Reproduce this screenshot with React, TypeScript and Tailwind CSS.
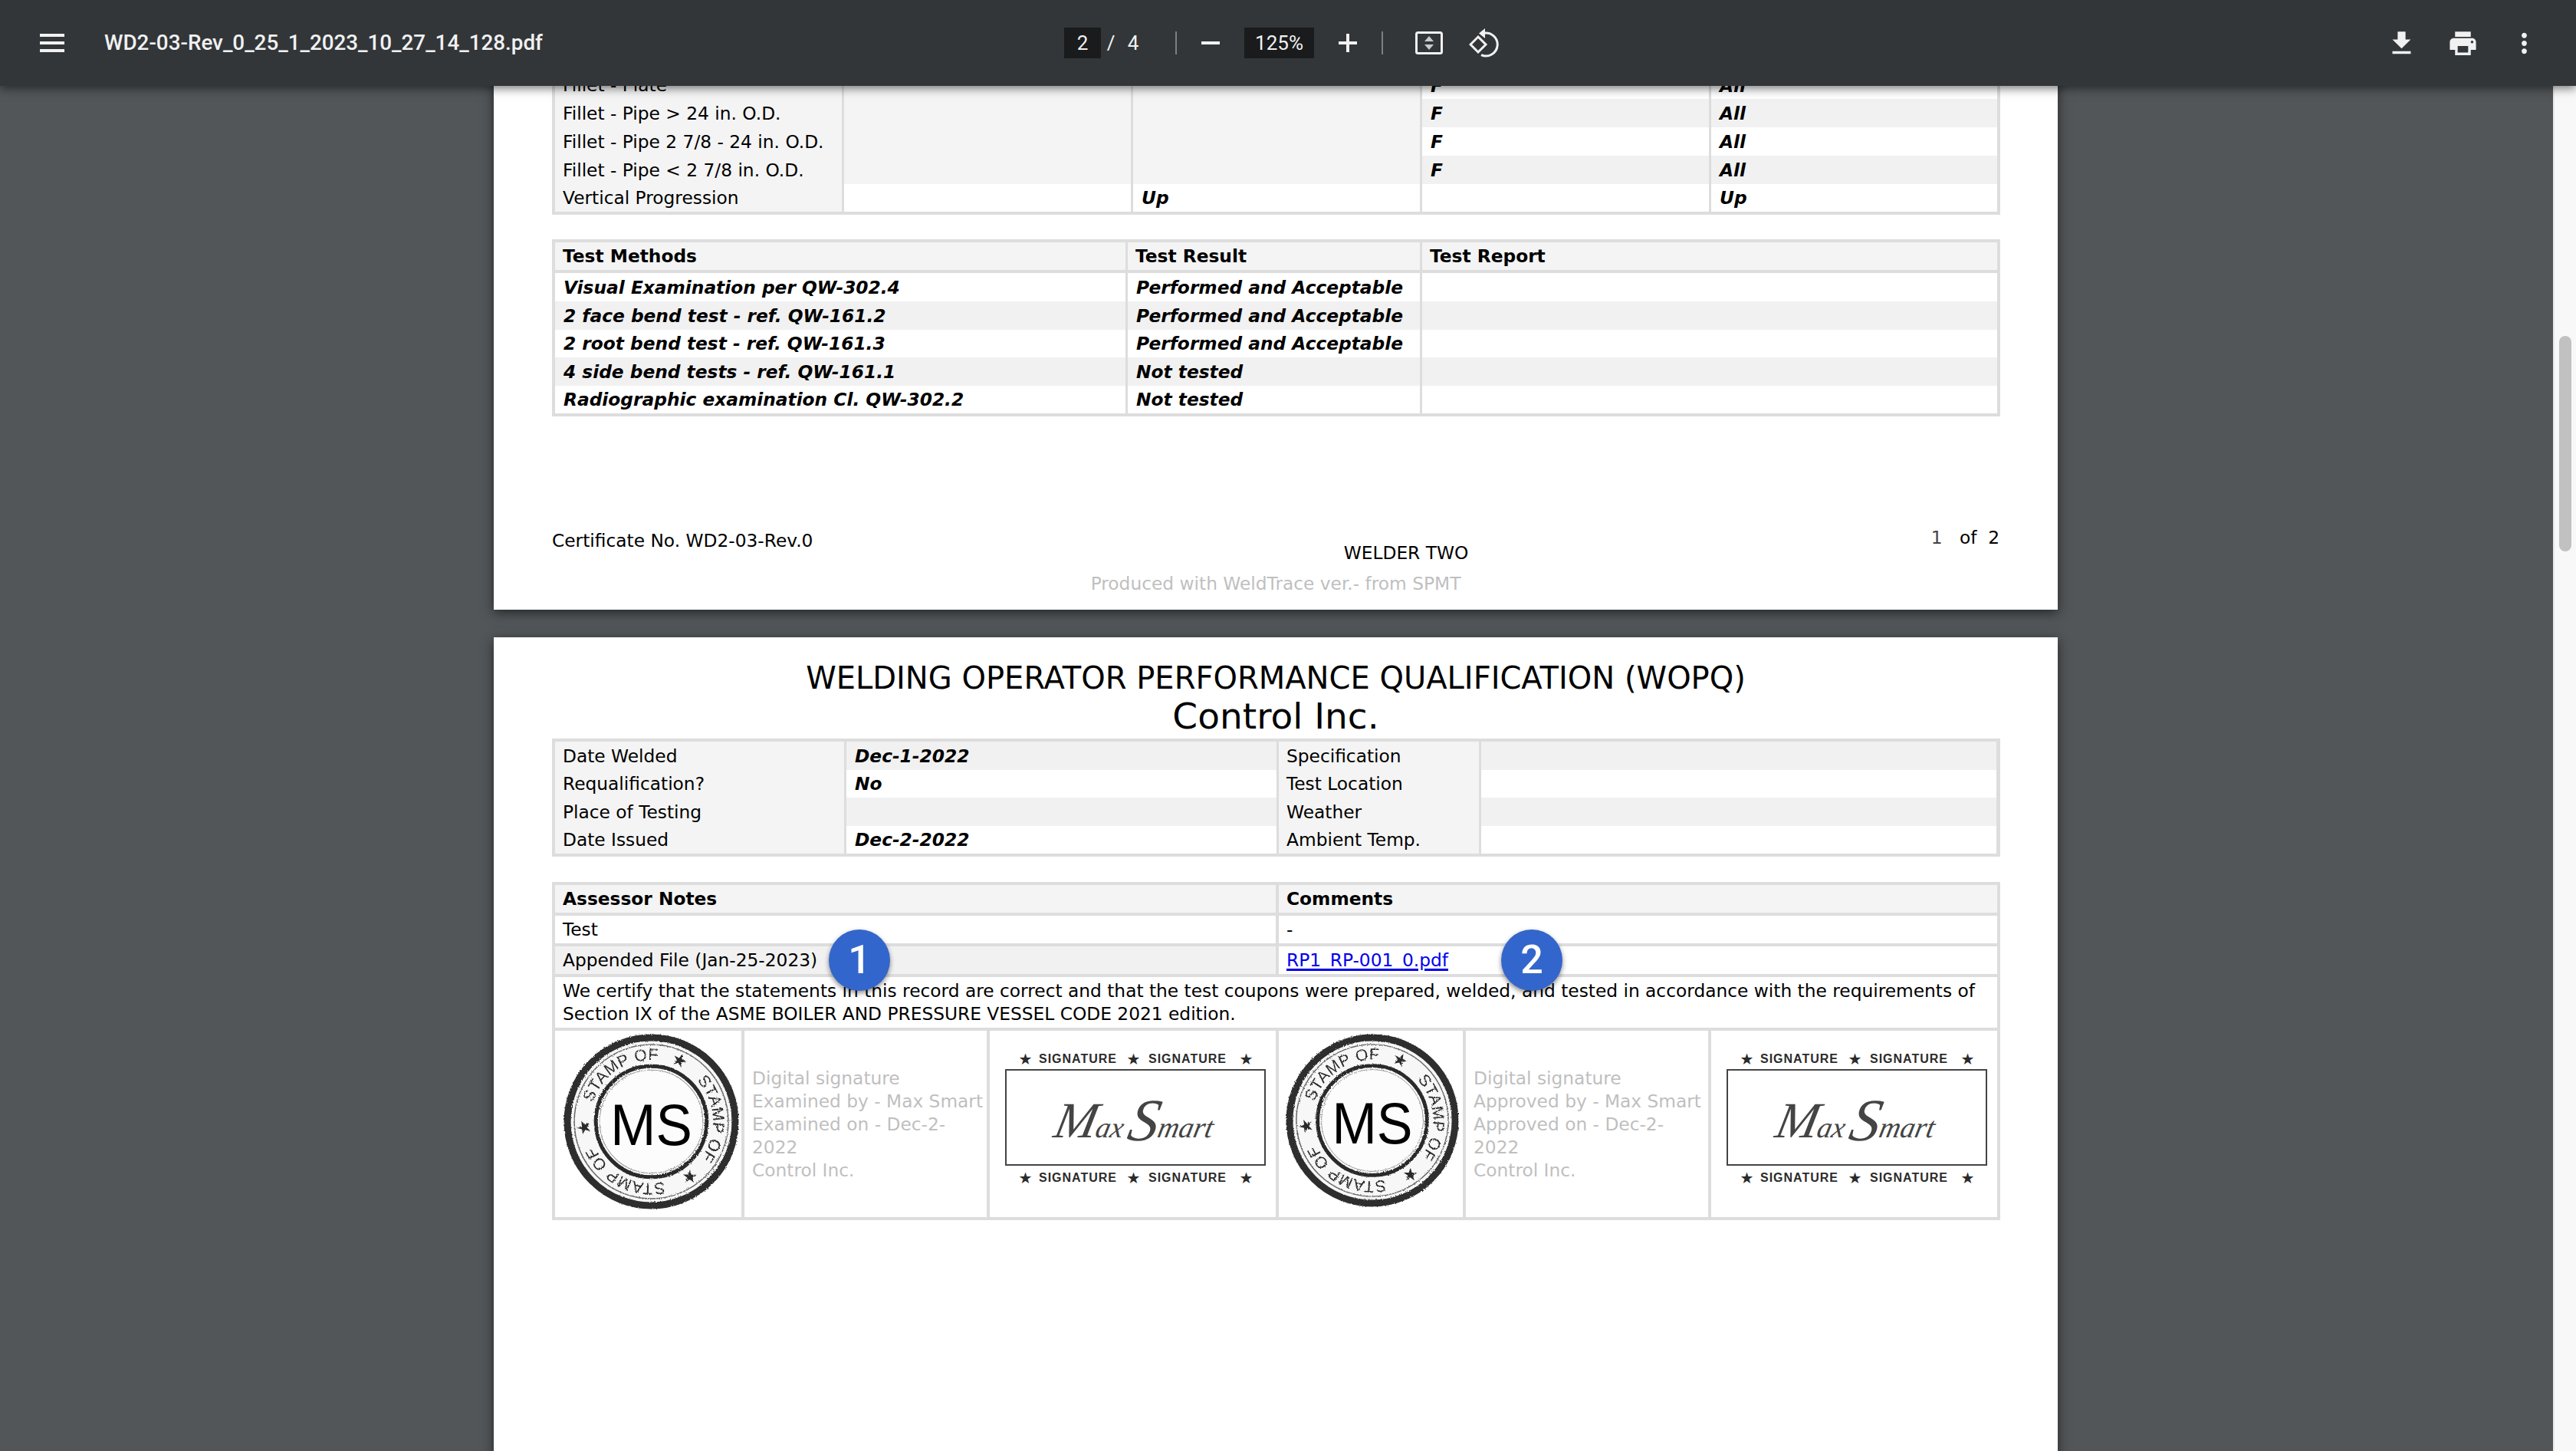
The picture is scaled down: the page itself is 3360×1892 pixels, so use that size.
import type { ReactNode } from "react";

const tones = {
  label: "bg-[#f4f4f4]",
  white: "bg-white",
  stripe: "bg-[#f1f1f1]",
};

type Tone = keyof typeof tones;

function Cell({
  tone = "white",
  value,
  className = "",
}: {
  tone?: Tone;
  value?: ReactNode;
  className?: string;
}) {
  return (
    <div className={`flex items-center whitespace-nowrap pl-[10px] pt-px ${tones[tone]} ${className}`}>{value}</div>
  );
}

function Value({ text }: { text: string }) {
  return <span className="pl-px font-bold italic">{text}</span>;
}

const H = ({ text }: { text: string }) => <span className="font-bold">{text}</span>;

const qualRows = [
  { h: "h-[36px]", label: "Fillet - Plate", c2: "", c3: "", c4: "F", c5: "All", t2: "label", t4: "white", line: true },
  { h: "h-[37px]", label: "Fillet - Pipe > 24 in. O.D.", c2: "", c3: "", c4: "F", c5: "All", t2: "label", t4: "stripe" },
  { h: "h-[37px]", label: "Fillet - Pipe 2 7/8 - 24 in. O.D.", c2: "", c3: "", c4: "F", c5: "All", t2: "label", t4: "white" },
  { h: "h-[37px]", label: "Fillet - Pipe < 2 7/8 in. O.D.", c2: "", c3: "", c4: "F", c5: "All", t2: "label", t4: "stripe" },
  { h: "h-[36px]", label: "Vertical Progression", c2: "", c3: "Up", c4: "", c5: "Up", t2: "white", t4: "white" },
] as const;

const testRows = [
  { h: "h-[37px]", method: "Visual Examination per QW-302.4", result: "Performed and Acceptable", tone: "white" },
  { h: "h-[37px]", method: "2 face bend test - ref. QW-161.2", result: "Performed and Acceptable", tone: "stripe" },
  { h: "h-[36px]", method: "2 root bend test - ref. QW-161.3", result: "Performed and Acceptable", tone: "white" },
  { h: "h-[37px]", method: "4 side bend tests - ref. QW-161.1", result: "Not tested", tone: "stripe" },
  { h: "h-[36px]", method: "Radiographic examination Cl. QW-302.2", result: "Not tested", tone: "white" },
] as const;

const dateRows = [
  { h: "h-[37px]", a: "Date Welded", b: "Dec-1-2022", c: "Specification", tone: "stripe" },
  { h: "h-[36px]", a: "Requalification?", b: "No", c: "Test Location", tone: "white" },
  { h: "h-[37px]", a: "Place of Testing", b: "", c: "Weather", tone: "stripe" },
  { h: "h-[36px]", a: "Date Issued", b: "Dec-2-2022", c: "Ambient Temp.", tone: "white" },
] as const;

function ToolbarIcon({ d }: { d: string }) {
  return (
    <svg viewBox="0 0 24 24" className="h-[41px] w-[41px] fill-[#f1f1f1]">
      <path d={d} />
    </svg>
  );
}

function Toolbar() {
  return (
    <div className="relative z-10 flex h-[112px] shrink-0 items-center bg-[#323639] font-['Roboto',sans-serif] text-[#f1f1f1] shadow-[0_3px_12px_rgba(0,0,0,0.55)]">
      <div className="w-[1388px] shrink-0 pl-[52px]">
        <div className="flex items-center">
          <div className="flex h-[24px] w-[32px] flex-col justify-between">
            <span className="h-[4px] bg-[#f1f1f1]" />
            <span className="h-[4px] bg-[#f1f1f1]" />
            <span className="h-[4px] bg-[#f1f1f1]" />
          </div>
          <span className="ml-[52px] text-[27.8px] font-medium whitespace-nowrap">
            WD2-03-Rev_0_25_1_2023_10_27_14_128.pdf
          </span>
        </div>
      </div>
      <div className="flex h-[40px] w-[48px] items-center justify-center bg-[#191b1c] text-[26px]">2</div>
      <span className="w-[26px] text-center text-[26px]">/</span>
      <span className="w-[32px] text-center text-[26px]">4</span>
      <span className="ml-[39px] h-[30px] w-[2px] bg-[#7d8083]" />
      <span className="ml-[32px] h-[4px] w-[24px] bg-[#f1f1f1]" />
      <div className="ml-[32px] flex h-[40px] w-[91px] items-center justify-center bg-[#191b1c] text-[26px]">125%</div>
      <svg viewBox="0 0 24 24" className="ml-[32px] h-[24px] w-[24px] fill-[#f1f1f1]">
        <path d="M10 0h4v10h10v4H14v10h-4V14H0v-4h10z" />
      </svg>
      <span className="ml-[32px] h-[30px] w-[2px] bg-[#7d8083]" />
      <svg viewBox="0 0 36 30" className="ml-[42px] h-[30px] w-[36px]">
        <rect x="1.5" y="1.5" width="33" height="27" rx="2" fill="none" stroke="#f1f1f1" strokeWidth="3" />
        <path d="M18 6l6 7H12zM18 24l6-7H12z" fill="#c9cacb" />
      </svg>
      <svg viewBox="0 0 40 40" className="ml-[34px] h-[40px] w-[40px]" fill="none" stroke="#f1f1f1" strokeWidth="3">
        <path d="M12 12l10 10-10 10L2 22z" />
        <path d="M19 7.3A15 15 0 1 1 16 35.6" />
        <path d="M21 1v13l-8-6.5z" fill="#f1f1f1" stroke="none" />
      </svg>
      <div className="ml-auto flex items-center gap-[39px] pr-[47px]">
        <ToolbarIcon d="M19 9h-4V3H9v6H5l7 7 7-7zM5 18v2h14v-2H5z" />
        <ToolbarIcon d="M19 8H5c-1.66 0-3 1.34-3 3v6h4v4h12v-4h4v-6c0-1.66-1.34-3-3-3zm-3 11H8v-5h8v5zm3-7c-.55 0-1-.45-1-1s.45-1 1-1 1 .45 1 1-.45 1-1 1zm-1-9H6v4h12V3z" />
        <ToolbarIcon d="M12 8c1.1 0 2-.9 2-2s-.9-2-2-2-2 .9-2 2 .9 2 2 2zm0 2c-1.1 0-2 .9-2 2s.9 2 2 2 2-.9 2-2-.9-2-2-2zm0 6c-1.1 0-2 .9-2 2s.9 2 2 2 2-.9 2-2-.9-2-2-2z" />
      </div>
    </div>
  );
}

function QualificationTable() {
  return (
    <div className="flex w-[1889px] flex-col bg-[#dddddd] px-[4px] pb-[4px]">
      {qualRows.map(row => (
        <div key={row.label} className={`grid grid-cols-[374px_374px_374px_374px_373px] gap-x-[3px] ${row.h}`}>
          <Cell tone="label" value={row.label} className={"line" in row ? "border-b border-[#ebebeb]" : ""} />
          <Cell tone={row.t2} className={"line" in row ? "border-b border-[#ebebeb]" : ""} />
          <Cell tone={row.t2} value={<Value text={row.c3} />} className={"line" in row ? "border-b border-[#ebebeb]" : ""} />
          <Cell tone={row.t4} value={<Value text={row.c4} />} />
          <Cell tone={row.t4} value={<Value text={row.c5} />} />
        </div>
      ))}
    </div>
  );
}

function TestTable() {
  return (
    <div className="mt-[32px] flex w-[1889px] flex-col bg-[#dddddd] p-[4px]">
      <div className="mb-[4px] grid h-[36px] grid-cols-[744px_381px_750px] gap-x-[3px]">
        <Cell tone="label" value={<H text="Test Methods" />} />
        <Cell tone="label" value={<H text="Test Result" />} />
        <Cell tone="label" value={<H text="Test Report" />} />
      </div>
      {testRows.map(row => (
        <div key={row.method} className={`grid grid-cols-[744px_381px_750px] gap-x-[3px] ${row.h}`}>
          <Cell tone={row.tone} value={<Value text={row.method} />} />
          <Cell tone={row.tone} value={<Value text={row.result} />} />
          <Cell tone={row.tone} />
        </div>
      ))}
    </div>
  );
}

function Stamp({ size, id }: { size: string; id: string }) {
  return (
    <svg viewBox="0 0 228 228" className={size}>
      <defs>
        <path id={id} d="M37.9 89.3A80 80 0 0 1 141.4 38.8" fill="none" />
        <filter id={`${id}-rough`} x="-5%" y="-5%" width="110%" height="110%">
          <feTurbulence type="fractalNoise" baseFrequency="0.7" numOctaves="2" seed="4" result="grain" />
          <feDisplacementMap in="SourceGraphic" in2="grain" scale="3" />
          <feGaussianBlur stdDeviation="0.55" />
        </filter>
      </defs>
      <g filter={`url(#${id}-rough)`}>
        <circle cx="114" cy="114" r="109" fill="#f7f7f7" stroke="#2e2e2e" strokeWidth="9" />
        <circle cx="114" cy="114" r="100" fill="none" stroke="#666666" strokeWidth="1.5" />
        <circle cx="114" cy="114" r="72" fill="#fcfcfc" stroke="#2b2b2b" strokeWidth="5" />
        <circle cx="114" cy="114" r="67" fill="none" stroke="#999999" strokeWidth="1" />
        {[0, 120, 240].map(angle => (
          <g key={angle} transform={`rotate(${angle} 114 114)`}>
            <text className="font-['Liberation_Sans',sans-serif]" fontSize="21" letterSpacing="0.5" fill="#2b2b2b">
              <textPath href={`#${id}`}>STAMP OF</textPath>
            </text>
            <text
              x="114"
              y="34"
              transform="rotate(25 114 114)"
              textAnchor="middle"
              fontSize="23"
              fill="#2b2b2b"
              className="font-['DejaVu_Sans',sans-serif]"
            >
              ★
            </text>
          </g>
        ))}
      </g>
      <text
        x="114"
        y="144"
        textAnchor="middle"
        fontSize="76"
        textLength="106"
        lengthAdjust="spacingAndGlyphs"
        fill="#000000"
        className="font-['Liberation_Sans',sans-serif]"
      >
        MS
      </text>
    </svg>
  );
}

function SignatureBand({ height }: { height: string }) {
  const star = <span className="w-[20px] text-center font-['DejaVu_Sans',sans-serif] text-[20px]">★</span>;
  return (
    <div
      className={`flex items-center pl-[17px] font-['Liberation_Sans',sans-serif] text-[16px] font-bold tracking-[1px] text-[#2b2b2b] ${height}`}
    >
      {star}
      <span className="ml-[7px] w-[102px]">SIGNATURE</span>
      <span className="ml-[12px] flex">{star}</span>
      <span className="ml-[9px] w-[102px]">SIGNATURE</span>
      <span className="ml-[16px] flex">{star}</span>
    </div>
  );
}

function Signature() {
  return (
    <div className="flex flex-col pl-[20px] pt-[24px]">
      <SignatureBand height="h-[26px]" />
      <div className="flex h-[126px] w-[340px] items-end justify-center border-2 border-[#444444] pb-[26px] font-['Liberation_Serif',serif] font-normal text-[#444444] italic">
        <div className="flex -skew-x-[12deg] items-end">
          <span className="text-[66px] leading-[62px]">M</span>
          <span className="text-[38px] leading-[44px]">ax</span>
          <span className="ml-[6px] text-[78px] leading-[62px]">S</span>
          <span className="text-[38px] leading-[44px]">mart</span>
        </div>
      </div>
      <SignatureBand height="h-[32px]" />
    </div>
  );
}

function DigitalText({ lines }: { lines: string[] }) {
  return (
    <div className="pl-[10px] pr-[2px] pt-[47px] leading-[30px] text-[#bfbfbf]">
      {lines.map(line => (
        <div key={line}>{line}</div>
      ))}
    </div>
  );
}

function Badge({ n, className }: { n: number; className: string }) {
  return (
    <div
      className={`absolute top-[62px] flex h-[80px] w-[80px] items-center justify-center rounded-full bg-[#3366cc] font-['Roboto',sans-serif] text-[52px] font-medium text-white shadow-[0_3px_6px_rgba(0,0,0,0.45)] ${className}`}
    >
      {n}
    </div>
  );
}

function AssessorTable() {
  return (
    <div className="relative mt-[33px] flex w-[1889px] flex-col gap-y-[4px] bg-[#dddddd] p-[4px]">
      <div className="grid h-[36px] grid-cols-[940px_937px] gap-x-[4px]">
        <Cell tone="label" value={<H text="Assessor Notes" />} />
        <Cell tone="label" value={<H text="Comments" />} />
      </div>
      <div className="grid h-[36px] grid-cols-[940px_937px] gap-x-[4px]">
        <Cell value="Test" />
        <Cell value="-" />
      </div>
      <div className="grid h-[36px] grid-cols-[940px_937px] gap-x-[4px]">
        <Cell tone="stripe" value="Appended File (Jan-25-2023)" />
        <Cell
          value={
            <a href="#" className="text-[#0000ee] underline decoration-[3px] underline-offset-[3px]">
              RP1_RP-001_0.pdf
            </a>
          }
        />
      </div>
      <div className="h-[66px] bg-white pl-[10px] pt-[3px] leading-[30px]">
        We certify that the statements in this record are correct and that the test coupons were prepared, welded, and
        tested in accordance with the requirements of Section IX of the ASME BOILER AND PRESSURE VESSEL CODE 2021
        edition.
      </div>
      <div className="grid h-[243px] grid-cols-[243px_316px_373px_240px_316px_373px] gap-x-[4px] bg-[#dddddd]">
        <div className="bg-white pl-[11px] pt-[4px]">
          <Stamp id="stamp-arc-a" size="h-[229px] w-[229px]" />
        </div>
        <div className="bg-white">
          <DigitalText lines={["Digital signature", "Examined by - Max Smart", "Examined on - Dec-2-2022", "Control Inc."]} />
        </div>
        <div className="bg-white">
          <Signature />
        </div>
        <div className="bg-white pl-[9px] pt-[4px]">
          <Stamp id="stamp-arc-b" size="h-[226px] w-[226px]" />
        </div>
        <div className="bg-white">
          <DigitalText lines={["Digital signature", "Approved by - Max Smart", "Approved on - Dec-2-2022", "Control Inc."]} />
        </div>
        <div className="bg-white">
          <Signature />
        </div>
      </div>
      <Badge n={1} className="left-[361px]" />
      <Badge n={2} className="left-[1238px]" />
    </div>
  );
}

export default function App() {
  return (
    <div className="flex h-[1892px] w-[3360px] flex-col overflow-hidden font-['DejaVu_Sans',sans-serif] text-[23.3px] text-black">
      <Toolbar />
      <div className="flex min-h-0 flex-1">
        <div className="min-w-0 flex-1 overflow-hidden bg-[#525659] pl-[644px]">
          <div className="-mt-[19px] w-[2040px] bg-white pb-[19px] pl-[76px] shadow-[0_4px_14px_rgba(0,0,0,0.55)]">
            <QualificationTable />
            <TestTable />
            <div className="mt-[143px] grid h-[59px] grid-cols-[1000px_228px_660px]">
              <div className="pt-[4px] leading-[30px]">Certificate No. WD2-03-Rev.0</div>
              <div className="pt-[20px] text-center leading-[30px]">WELDER TWO</div>
              <div className="text-right leading-[30px] whitespace-pre">
                <span className="text-[#444444]">1</span>   of  2
              </div>
            </div>
            <div className="-ml-[76px] pt-px text-center leading-[30px] text-[#bfbfbf]">
              Produced with WeldTrace ver.- from SPMT
            </div>
          </div>
          <div className="mt-[36px] h-[1100px] w-[2040px] bg-white pl-[76px] pt-[30px] shadow-[0_4px_14px_rgba(0,0,0,0.55)]">
            <div className="-ml-[76px] text-center">
              <div className="text-[40px] leading-[47px]">WELDING OPERATOR PERFORMANCE QUALIFICATION (WOPQ)</div>
              <div className="text-[47px] leading-[51px]">Control Inc.</div>
            </div>
            <div className="mt-[4px] flex w-[1889px] flex-col bg-[#dddddd] p-[4px]">
              {dateRows.map(row => (
                <div key={row.a} className={`grid grid-cols-[377px_561px_261px_672px] gap-x-[3px] ${row.h}`}>
                  <Cell tone="label" value={row.a} />
                  <Cell tone={row.tone} value={<Value text={row.b} />} />
                  <Cell tone="label" value={row.c} />
                  <Cell tone={row.tone} />
                </div>
              ))}
            </div>
            <AssessorTable />
          </div>
        </div>
        <div className="relative w-[30px] shrink-0 border-l-2 border-[#e8e8e8] bg-[#f8f8f8]">
          <div className="absolute left-[6px] top-[326px] h-[281px] w-[16px] rounded-[8px] bg-[#c1c1c1]" />
        </div>
      </div>
    </div>
  );
}
